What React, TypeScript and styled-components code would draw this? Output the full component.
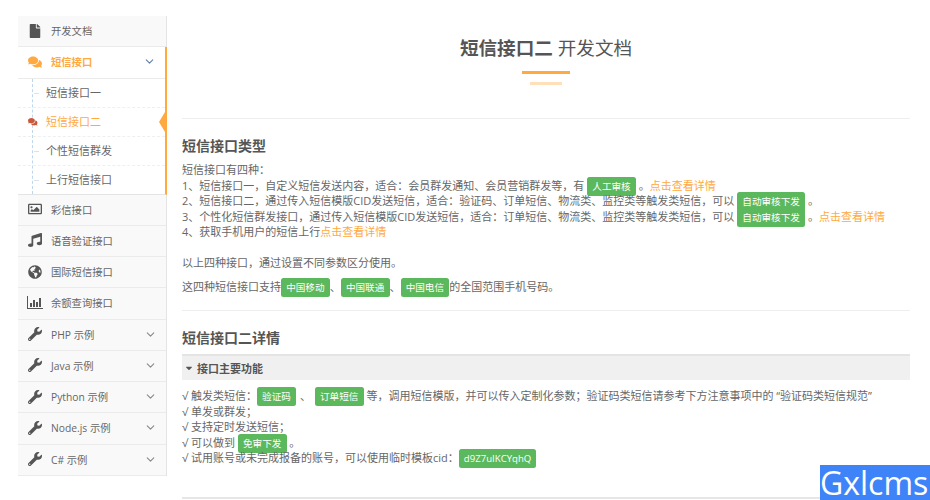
import React from 'react';
import styled, { createGlobalStyle } from 'styled-components';
import { ChevronDown } from 'lucide-react';
import { FaComments, FaFile, FaGlobeAmericas, FaMusic, FaRegImage, FaWrench, FaCaretDown } from 'react-icons/fa';

const GlobalStyle = createGlobalStyle`
    html, body {
        margin: 0;
        height: 500px;
        overflow: hidden;
        background: #fff;
        font-family: 'Open Sans', 'Noto Sans CJK SC', sans-serif;
        color: #666;
    }
`;

const ORANGE = '#ffa940';

const Page = styled.div`
    display: flex;
    align-items: flex-start;
    height: 500px;
    padding: 16px 20px 0 18px;
    box-sizing: border-box;
    overflow: hidden;
`;

const Sidebar = styled.nav`
    width: 149px;
    flex-shrink: 0;
    background: #f9f9f9;
    border-right: 1px solid #e4e4e4;
    box-sizing: border-box;
`;

const MenuRow = styled.div<{ $active?: boolean }>`
    height: 31.25px;
    display: flex;
    align-items: center;
    box-sizing: border-box;
    padding: 0 9px 1px 9px;
    font-size: 10.3px;
    border-bottom: 1px solid #ebebeb;
    color: ${p => (p.$active ? ORANGE : '#666')};
    font-weight: ${p => (p.$active ? 700 : 400)};
    background: ${p => (p.$active ? '#fff' : 'transparent')};
`;

const MenuIcon = styled.span<{ $active?: boolean }>`
    width: 16px;
    margin-right: 8px;
    display: flex;
    justify-content: center;
    font-size: 14px;
    color: ${p => (p.$active ? ORANGE : '#555')};
`;

const MenuLabel = styled.span`
    flex: 1;
    white-space: nowrap;
`;

const SubMenu = styled.div`
    position: relative;
    background: #fff;
    margin-right: -1px;
    border-right: 2px solid ${ORANGE};
    border-bottom: 1px solid #e4e4e4;
`;

const ActiveGroup = styled.div`
    margin-right: -1px;
    border-right: 2px solid ${ORANGE};
`;

const SubRail = styled.div`
    position: absolute;
    left: 14px;
    top: 0;
    bottom: 0;
    border-left: 1px dashed #bcd7ee;
`;

const SubItem = styled.div<{ $active?: boolean }>`
    position: relative;
    height: 29px;
    display: flex;
    align-items: center;
    box-sizing: border-box;
    padding: 0 0 1px 28px;
    font-size: 11px;
    white-space: nowrap;
    color: ${p => (p.$active ? ORANGE : '#666')};
    border-bottom: 1px dashed #efefef;

    &:last-child {
        height: 28px;
        padding-bottom: 1px;
        border-bottom: none;
    }
`;

const SubTick = styled.span`
    position: absolute;
    left: 16px;
    top: 14px;
    width: 5px;
    border-top: 1px solid #d5e4f0;
`;

const SubIcon = styled.span`
    position: absolute;
    left: 10px;
    top: 9px;
    font-size: 9.5px;
    line-height: 10px;
    color: #c9593a;
`;

const ActiveArrow = styled.span`
    position: absolute;
    right: 0;
    top: 4px;
    width: 0;
    height: 0;
    border-style: solid;
    border-width: 10px 6px 10px 0;
    border-color: transparent ${ORANGE} transparent transparent;
`;

const Main = styled.main`
    flex: 1;
    min-width: 0;
    margin-left: 15px;
`;

const TitleBlock = styled.header`
    height: 103px;
    border-bottom: 1px solid #eee;
    box-sizing: border-box;
    display: flex;
    flex-direction: column;
    align-items: center;
`;

const Title = styled.h1`
    margin: 18px 0 0;
    font-size: 18.6px;
    line-height: 27px;
    font-weight: 400;
    color: #555;
    white-space: nowrap;

    b {
        font-weight: 700;
    }
`;

const TitleBar = styled.div<{ $width: number; $color: string }>`
    width: ${p => p.$width}px;
    height: 3px;
    margin-top: ${p => (p.$width > 40 ? 10 : 8)}px;
    background: ${p => p.$color};
`;

const SectionTitle = styled.h3`
    margin: 18px 0 8px;
    font-size: 14px;
    line-height: 17px;
    font-weight: 700;
    color: #555;
`;

const Line = styled.div<{ $gap?: number }>`
    font-size: 11px;
    line-height: 15.5px;
    white-space: nowrap;
    margin-top: ${p => p.$gap ?? 0}px;
`;

const Tag = styled.span`
    background: #5cb85c;
    color: #fff;
    font-size: 9.6px;
    line-height: 1;
    padding: 3px 5.2px;
    border-radius: 2.5px;
`;

const TagGap = styled.span`
    margin: 0 1px;
`;

const MoreLink = styled.a`
    color: ${ORANGE};
`;

const Divider = styled.div`
    border-top: 1px solid #eee;
    margin-top: 16px;
`;

const DetailTitle = styled(SectionTitle)`
    margin: 18px 0 8px;
`;

const FoldBar = styled.div`
    height: 26px;
    box-sizing: border-box;
    display: flex;
    align-items: center;
    gap: 3px;
    padding-left: 2px;
    background: #f0f0f0;
    border-top: 2px solid #e4e4e4;
    font-size: 11px;
    font-weight: 700;
    color: #555;
`;

const CheckList = styled.div`
    margin-top: 8px;
`;

const BottomRule = styled.div`
    border-top: 2px solid #e6e6e6;
    margin-top: 31px;
`;

const Watermark = styled.div`
    position: absolute;
    right: 0;
    bottom: 0;
    width: 110px;
    height: 35px;
    background: #3f83f8;
    color: #fff;
    font-size: 32px;
    line-height: 35px;
    white-space: nowrap;
`;

const ChartIcon = () => (
    <svg width="16" height="13" viewBox="0 0 16 13" fill="#555">
        <path d="M0 0h1v12h15v1H0z" />
        <rect x="3" y="7" width="2" height="4" />
        <rect x="6" y="4" width="2" height="7" />
        <rect x="9" y="6" width="2" height="5" />
        <rect x="12" y="2" width="2" height="9" />
    </svg>
);

const plainItems = [
    { icon: <FaRegImage />, label: '彩信接口' },
    { icon: <FaMusic />, label: '语音验证接口' },
    { icon: <FaGlobeAmericas />, label: '国际短信接口' },
    { icon: <ChartIcon />, label: '余额查询接口' },
];

const examples = ['PHP 示例', 'Java 示例', 'Python 示例', 'Node.js 示例', 'C# 示例'];
const subItems = ['短信接口一', '短信接口二', '个性短信群发', '上行短信接口'];

const App = () => {
    return (
        <>
            <GlobalStyle />
            <Page>
                <Sidebar>
                    <MenuRow>
                        <MenuIcon><FaFile /></MenuIcon>
                        <MenuLabel>开发文档</MenuLabel>
                    </MenuRow>
                    <ActiveGroup>
                        <MenuRow $active>
                            <MenuIcon $active><FaComments /></MenuIcon>
                            <MenuLabel>短信接口</MenuLabel>
                            <ChevronDown size={13} color="#5f7fa8" />
                        </MenuRow>
                    </ActiveGroup>
                    <SubMenu>
                        <SubRail />
                        {subItems.map((item, i) => (
                            <SubItem key={item} $active={i === 1}>
                                {i === 1 ? <SubIcon><FaComments /></SubIcon> : <SubTick />}
                                {item}
                                {i === 1 && <ActiveArrow />}
                            </SubItem>
                        ))}
                    </SubMenu>
                    {plainItems.map(item => (
                        <MenuRow key={item.label}>
                            <MenuIcon>{item.icon}</MenuIcon>
                            <MenuLabel>{item.label}</MenuLabel>
                        </MenuRow>
                    ))}
                    {examples.map(label => (
                        <MenuRow key={label}>
                            <MenuIcon><FaWrench /></MenuIcon>
                            <MenuLabel>{label}</MenuLabel>
                            <ChevronDown size={13} color="#888" />
                        </MenuRow>
                    ))}
                </Sidebar>
                <Main>
                    <TitleBlock>
                        <Title><b>短信接口二</b> 开发文档</Title>
                        <TitleBar $width={48} $color={ORANGE} />
                        <TitleBar $width={32} $color="#ffe0b8" />
                    </TitleBlock>
                    <SectionTitle>短信接口类型</SectionTitle>
                    <Line>短信接口有四种：</Line>
                    <Line>1、短信接口一，自定义短信发送内容，适合：会员群发通知、会员营销群发等，有 <Tag>人工审核</Tag> 。<MoreLink>点击查看详情</MoreLink></Line>
                    <Line>2、短信接口二，通过传入短信模版CID发送短信，适合：验证码、订单短信、物流类、监控类等触发类短信，可以 <Tag>自动审核下发</Tag> 。</Line>
                    <Line>3、个性化短信群发接口，通过传入短信模版CID发送短信，适合：订单短信、物流类、监控类等触发类短信，可以 <Tag>自动审核下发</Tag> 。<MoreLink>点击查看详情</MoreLink></Line>
                    <Line>4、获取手机用户的短信上行<MoreLink>点击查看详情</MoreLink></Line>
                    <Line $gap={15.5}>以上四种接口，通过设置不同参数区分使用。</Line>
                    <Line $gap={8}>这四种短信接口支持<Tag>中国移动</Tag>、<Tag>中国联通</Tag>、<Tag>中国电信</Tag>的全国范围手机号码。</Line>
                    <Divider />
                    <DetailTitle>短信接口二详情</DetailTitle>
                    <FoldBar><FaCaretDown size={10} />接口主要功能</FoldBar>
                    <CheckList>
                        <Line>√ 触发类短信：<Tag>验证码</Tag> <TagGap>、</TagGap> <Tag>订单短信</Tag> 等，调用短信模版，并可以传入定制化参数；验证码类短信请参考下方注意事项中的 “验证码类短信规范”</Line>
                        <Line>√ 单发或群发；</Line>
                        <Line>√ 支持定时发送短信；</Line>
                        <Line>√ 可以做到 <Tag>免审下发</Tag> 。</Line>
                        <Line>√ 试用账号或未完成报备的账号，可以使用临时模板cid：<Tag>d9Z7uIKCYqhQ</Tag></Line>
                    </CheckList>
                    <BottomRule />
                </Main>
            </Page>
            <Watermark>Gxlcms</Watermark>
        </>
    );
};

export default App;
